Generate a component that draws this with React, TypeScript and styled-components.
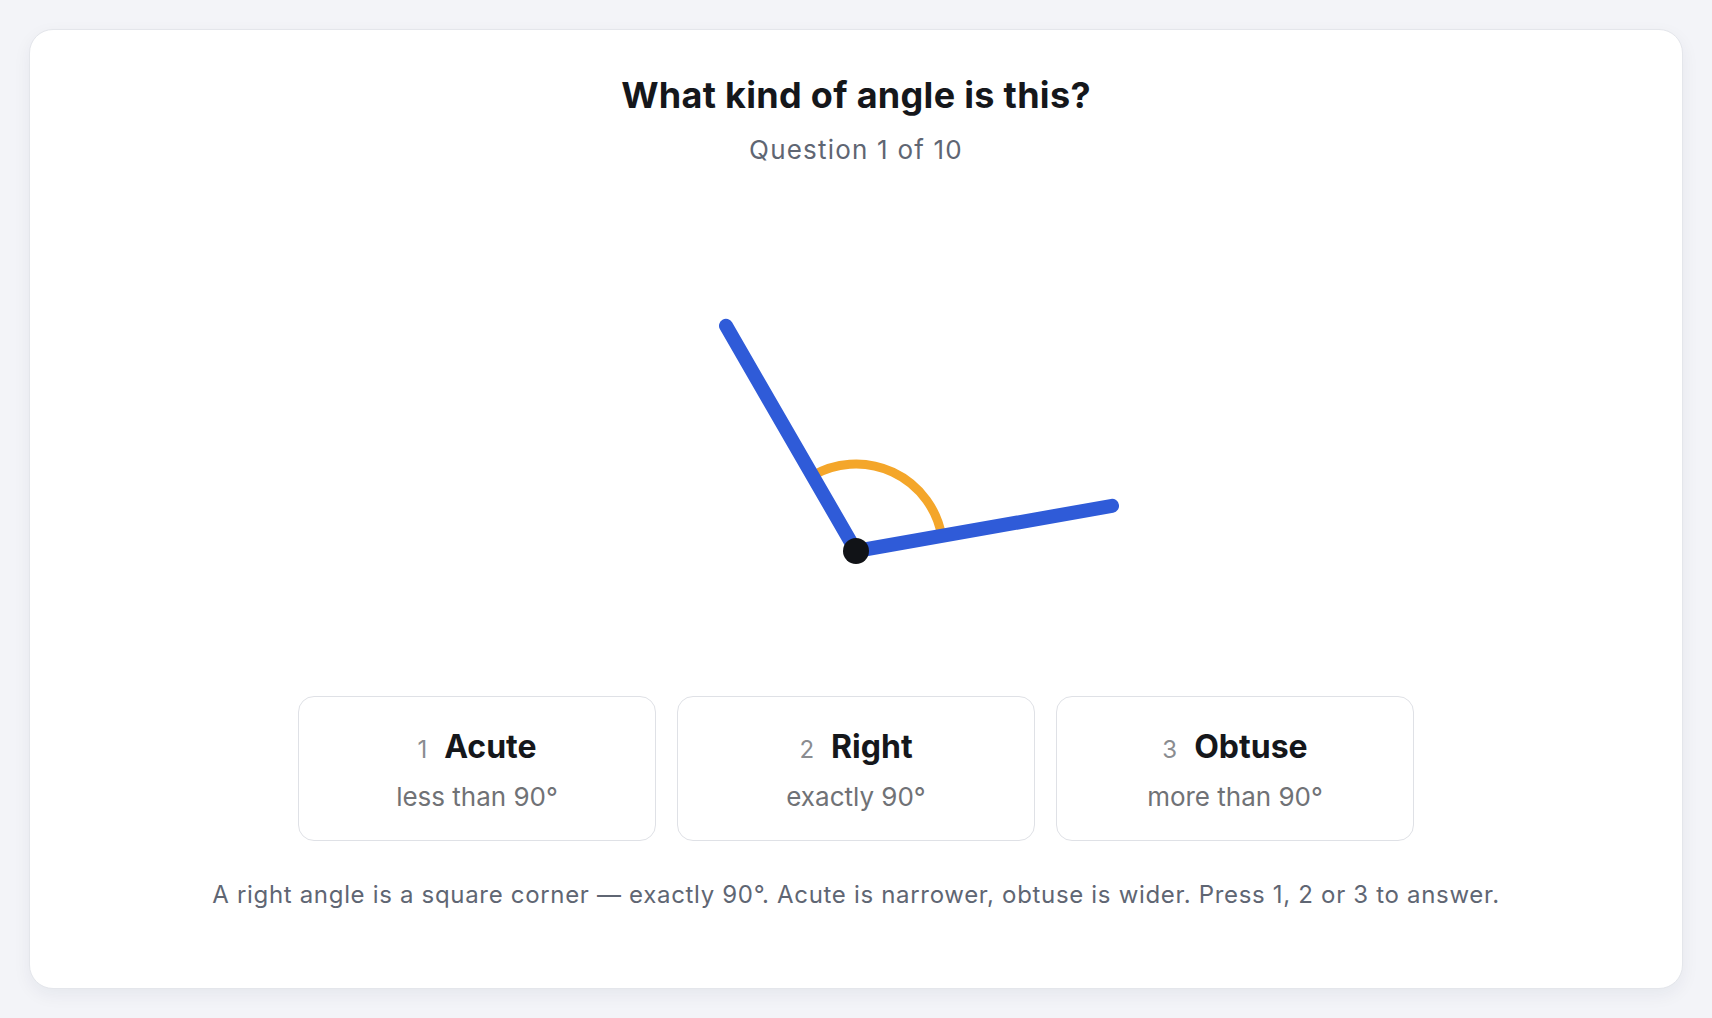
import styled, { createGlobalStyle } from "styled-components";

const GlobalStyle = createGlobalStyle`
    html, body {
        margin: 0;
        padding: 0;
        background: #f3f4f8;
        font-family: "Inter", "Noto Sans", sans-serif;
    }
    * {
        box-sizing: border-box;
    }
`;

const Page = styled.div`
    min-height: 100vh;
    padding: 29px 29px 29px 29px;
    display: flex;
`;

const Card = styled.main`
    flex: 1;
    display: flex;
    flex-direction: column;
    align-items: center;
    background: #ffffff;
    border: 1px solid #e4e6eb;
    border-radius: 24px;
    box-shadow: 0 6px 18px rgba(20, 30, 60, 0.06);
    padding: 43px 40px 40px;
`;

const Title = styled.h1`
    margin: 0;
    font-size: 36px;
    font-weight: 700;
    line-height: 44px;
    color: #15171b;
    letter-spacing: 0.3px;
`;

const Subtitle = styled.p`
    margin: 18px 0 0;
    font-size: 26px;
    line-height: 29px;
    letter-spacing: 1.2px;
    color: #5f6673;
`;

const Figure = styled.svg`
    display: block;
    margin: 24px 0 28px;
`;

const Choices = styled.div`
    display: grid;
    grid-template-columns: repeat(3, 358px);
    gap: 21px;
`;

const Choice = styled.button`
    display: flex;
    flex-direction: column;
    align-items: center;
    gap: 17px;
    padding: 32px 16px 29px;
    background: #ffffff;
    border: 1.5px solid #dfe1e6;
    border-radius: 16px;
    font-family: inherit;
    cursor: pointer;
`;

const ChoiceHead = styled.div`
    display: flex;
    align-items: baseline;
    gap: 17px;
`;

const Key = styled.span`
    font-size: 24px;
    color: #8a8c90;
`;

const Label = styled.span`
    font-size: 32px;
    font-weight: 700;
    line-height: 36px;
    color: #15171b;
`;

const Hint = styled.span`
    font-size: 26px;
    line-height: 29px;
    color: #707276;
`;

const Footnote = styled.p`
    margin: 40px 0 0;
    font-size: 24px;
    line-height: 27px;
    letter-spacing: 0.68px;
    color: #5f6673;
`;

const choices = [
    { key: 1, label: "Acute", hint: "less than 90°" },
    { key: 2, label: "Right", hint: "exactly 90°" },
    { key: 3, label: "Obtuse", hint: "more than 90°" },
];

const W = 560;
const H = 480;
const cx = 280;
const cy = 363;
const armLen = 260;
const arcR = 87;
const a1 = 10;
const a2 = 120;

const pt = (deg: number, r: number) => {
    const rad = (deg * Math.PI) / 180;
    return [cx + r * Math.cos(rad), cy - r * Math.sin(rad)];
};

const AngleDrawing = () => {
    const [e1x, e1y] = pt(a1, armLen);
    const [e2x, e2y] = pt(a2, armLen);
    const [s1x, s1y] = pt(a1, arcR);
    const [s2x, s2y] = pt(a2, arcR);
    return (
        <Figure width={W} height={H} viewBox={`0 0 ${W} ${H}`}>
            <path
                d={`M ${s1x} ${s1y} A ${arcR} ${arcR} 0 0 0 ${s2x} ${s2y}`}
                fill="none"
                stroke="#f4a62a"
                strokeWidth={9}
            />
            <line x1={cx} y1={cy} x2={e1x} y2={e1y} stroke="#2f5bd8" strokeWidth={14} strokeLinecap="round" />
            <line x1={cx} y1={cy} x2={e2x} y2={e2y} stroke="#2f5bd8" strokeWidth={14} strokeLinecap="round" />
            <circle cx={cx} cy={cy} r={13} fill="#111317" />
        </Figure>
    );
};

const App = () => {
    return (
        <>
            <GlobalStyle />
            <Page>
                <Card>
                    <Title>What kind of angle is this?</Title>
                    <Subtitle>Question 1 of 10</Subtitle>
                    <AngleDrawing />
                    <Choices>
                        {choices.map((c) => (
                            <Choice key={c.key}>
                                <ChoiceHead>
                                    <Key>{c.key}</Key>
                                    <Label>{c.label}</Label>
                                </ChoiceHead>
                                <Hint>{c.hint}</Hint>
                            </Choice>
                        ))}
                    </Choices>
                    <Footnote>
                        A right angle is a square corner — exactly 90°. Acute is narrower, obtuse is wider. Press 1, 2 or 3 to answer.
                    </Footnote>
                </Card>
            </Page>
        </>
    );
};

export default App;
